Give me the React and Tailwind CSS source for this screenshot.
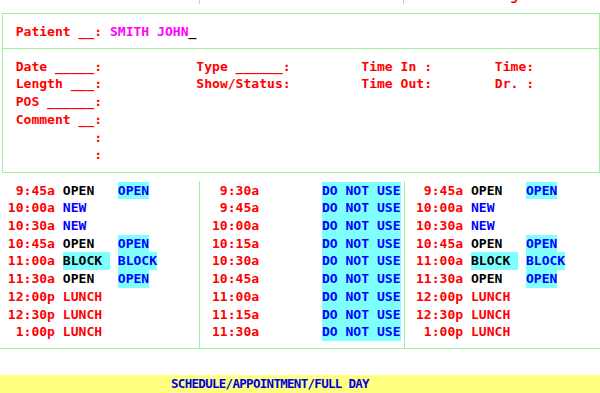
import React from 'react';

const LINE = 'bg-[#a0f0a0]';

const SIDE_ROWS = [
  [' 9:45a', 'OPEN', 'OPEN'],
  ['10:00a', 'NEW'],
  ['10:30a', 'NEW'],
  ['10:45a', 'OPEN', 'OPEN'],
  ['11:00a', 'BLOCK', 'BLOCK'],
  ['11:30a', 'OPEN', 'OPEN'],
  ['12:00p', 'LUNCH'],
  ['12:30p', 'LUNCH'],
  [' 1:00p', 'LUNCH'],
];

const MIDDLE_TIMES = [' 9:30a', ' 9:45a', '10:00a', '10:15a', '10:30a', '10:45a', '11:00a', '11:15a', '11:30a'];

const FIELDS = [
  ['Date _____:', 'Type ______:', 'Time In :', 'Time:'],
  ['Length ___:', 'Show/Status:', 'Time Out:', 'Dr. :'],
  ['POS ______:'],
  ['Comment __:'],
  ['          :'],
  ['          :'],
];

// columns start at 2, 25, 46, 63 -> pad each piece to the next column
function fieldLine(parts) {
  const widths = [23, 21, 17];
  return parts.map((p, i) => (i < parts.length - 1 ? p.padEnd(widths[i]) : p)).join('');
}

function firstStatus(s) {
  if (s === 'OPEN') return <span className="text-black">OPEN</span>;
  if (s === 'NEW') return <span className="text-[#0000ff]">NEW</span>;
  if (s === 'LUNCH') return <span className="text-[#ff0000]">LUNCH</span>;
  if (s === 'BLOCK') return <span className="inline-block bg-[#80ffff] text-black">{'BLOCK '}</span>;
  return null;
}

function SideRow({ row }) {
  const [time, s1, s2] = row;
  return (
    <div className="flex whitespace-pre">
      <span className="w-[6ch] text-[#ff0000]">{time}</span>
      <span className="w-[1ch]"> </span>
      <span className="w-[7ch]">{firstStatus(s1)}</span>
      {s2 && <span className="bg-[#80ffff] text-[#0000ff]">{s2}</span>}
    </div>
  );
}

export default function App() {
  return (
    <div className="w-[600px] h-[393px] overflow-hidden bg-white font-['DejaVu_Sans_Mono',monospace] font-bold text-[13.05px] leading-[17.7px]">
      {/* clipped row above the form */}
      <div className="relative h-[13px]">
        <div className={`absolute left-[199px] top-0 w-px h-[4px] ${LINE}`} />
        <div className={`absolute left-[403px] top-0 w-px h-[4px] ${LINE}`} />
        <div className="absolute left-[510px] top-0 h-[4px] overflow-hidden">
          <div className="-mt-[13px] text-[#ff0000]">g</div>
        </div>
      </div>

      {/* form box */}
      <div className="ml-[2px] w-[598px] border border-[#a0f0a0]">
        <div className="pl-[12.7px] pt-[8.6px] pb-[7.7px] whitespace-pre text-[#ff0000]">
          Patient __: <span className="text-[#ff00ff]">SMITH JOHN</span><span className="text-black">_</span>
        </div>
        <div className={`h-px ${LINE}`} />
        <div className="pl-[12.7px] pt-[8.8px] pb-[8px] text-[#ff0000]">
          {FIELDS.map((f, i) => (
            <div key={i} className="whitespace-pre">{fieldLine(f)}</div>
          ))}
        </div>
      </div>

      {/* schedule columns */}
      <div className="flex mt-[8px]">
        <div className="w-[199px] pl-[7.85px] pt-[0.6px] pb-[7.1px]">
          {SIDE_ROWS.map((r) => <SideRow key={r[0]} row={r} />)}
        </div>
        <div className="w-[205px] border-l border-[#a0f0a0] pl-[12px] pt-[0.6px] pb-[7.1px] flex">
          <div className="w-[14ch]">
            {MIDDLE_TIMES.map((t) => (
              <div key={t} className="whitespace-pre text-[#ff0000]">{t}</div>
            ))}
          </div>
          <div className="bg-[#80ffff] h-[159.3px] text-[#0000ff]">
            {MIDDLE_TIMES.map((t) => (
              <div key={t} className="whitespace-pre">DO NOT USE</div>
            ))}
          </div>
        </div>
        <div className="flex-1 border-l border-[#a0f0a0] pl-[11px] pt-[0.6px] pb-[7.1px]">
          {SIDE_ROWS.map((r) => <SideRow key={r[0]} row={r} />)}
        </div>
      </div>
      <div className={`h-px ${LINE}`} />

      {/* status bar */}
      <div className="mt-[26px] h-[18px] bg-[#ffff80] pl-[171px] text-[12.5px] tracking-[-0.7px] leading-[18px] text-[#0000e0]">
        SCHEDULE/APPOINTMENT/FULL DAY
      </div>
    </div>
  );
}
